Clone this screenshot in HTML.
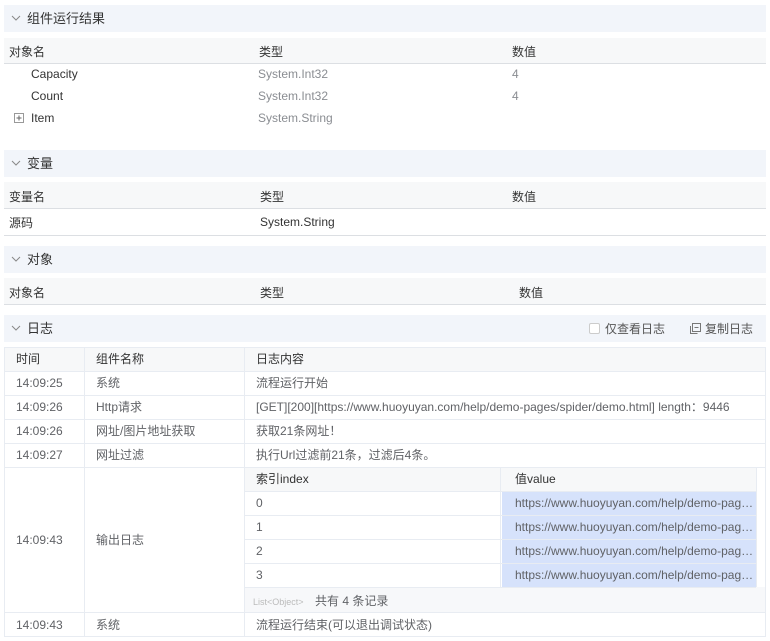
<!DOCTYPE html>
<html><head><meta charset="utf-8"><style>
*{box-sizing:border-box;margin:0;padding:0}
body{width:770px;height:641px;background:#fff;font-family:"Liberation Sans","Noto Sans CJK SC",sans-serif;font-size:12px;color:#333;position:relative;overflow:hidden}
.a{position:absolute;white-space:nowrap;line-height:14px;margin-top:1px}
.hd{position:absolute;left:4px;width:762px;height:27px;background:#f2f5fa}
.hd .t{position:absolute;left:23px;top:6px;font-size:13px;line-height:15px;color:#333}
.hd svg{position:absolute;left:7px;top:10px}
.th{position:absolute;left:4px;width:762px;background:#f7f8f9;border-bottom:1px solid #dcdfe3}
.ln{position:absolute;left:4px;width:762px;height:1px;background:#dcdfe3}
.g{color:#8a8d92}
.lg{color:#606266}
.b{position:absolute;background:#e8ecf2}
.blue{position:absolute;left:502px;width:254px;height:23px;background:#d6e2fb}
</style></head><body>
<div class="hd" style="top:5px"><svg width="10" height="6" viewBox="0 0 10 6"><path d="M1 1l4 4 4-4" fill="none" stroke="#888" stroke-width="1"/></svg><div class="t">组件运行结果</div></div>
<div class="th" style="top:38px;height:26px"></div>
<div class="a" style="left:9px;top:44px">对象名</div><div class="a" style="left:259px;top:44px">类型</div><div class="a" style="left:512px;top:44px">数值</div>
<div class="a" style="left:31px;top:66px">Capacity</div><div class="a g" style="left:258px;top:66px">System.Int32</div><div class="a g" style="left:512px;top:66px">4</div>
<div class="a" style="left:31px;top:88px">Count</div><div class="a g" style="left:258px;top:88px">System.Int32</div><div class="a g" style="left:512px;top:88px">4</div>
<svg class="a" style="left:14px;top:112px" width="10" height="10"><rect x="0.5" y="0.5" width="9" height="9" fill="#fff" stroke="#999"/><path d="M2.5 5h5M5 2.5v5" stroke="#666"/></svg>
<div class="a" style="left:31px;top:110px">Item</div><div class="a g" style="left:258px;top:110px">System.String</div>

<div class="hd" style="top:150px"><svg width="10" height="6" viewBox="0 0 10 6"><path d="M1 1l4 4 4-4" fill="none" stroke="#888"/></svg><div class="t">变量</div></div>
<div class="th" style="top:182px;height:27px"></div>
<div class="a" style="left:9px;top:189px">变量名</div><div class="a" style="left:260px;top:189px">类型</div><div class="a" style="left:512px;top:189px">数值</div>
<div class="a" style="left:9px;top:215px">源码</div><div class="a" style="left:260px;top:214px">System.String</div>
<div class="ln" style="top:235px"></div>

<div class="hd" style="top:246px"><svg width="10" height="6" viewBox="0 0 10 6"><path d="M1 1l4 4 4-4" fill="none" stroke="#888"/></svg><div class="t">对象</div></div>
<div class="th" style="top:278px;height:27px"></div>
<div class="a" style="left:9px;top:285px">对象名</div><div class="a" style="left:260px;top:285px">类型</div><div class="a" style="left:519px;top:285px">数值</div>

<div class="hd" style="top:315px"><svg width="10" height="6" viewBox="0 0 10 6"><path d="M1 1l4 4 4-4" fill="none" stroke="#888"/></svg><div class="t">日志</div>
<div style="position:absolute;left:585px;top:8px;width:11px;height:11px;border:1px solid #ccc;border-radius:2px;background:#fff"></div>
<div class="a" style="left:601px;top:6px;color:#555">仅查看日志</div>
<svg style="position:absolute;left:686px;top:8px" width="11" height="11"><rect x="2.5" y="0.5" width="8" height="8" fill="none" stroke="#777"/><path d="M0.5 3v7.5h7" fill="none" stroke="#777"/><path d="M4.5 4.5h4" stroke="#777"/></svg>
<div class="a" style="left:701px;top:6px;color:#555">复制日志</div></div>

<div style="position:absolute;left:4px;top:347px;width:762px;height:24px;background:#f7f8f9"></div>
<div style="position:absolute;left:245px;top:467px;width:511px;height:24px;background:#f7f8f9"></div>
<div style="position:absolute;left:245px;top:587px;width:521px;height:25px;background:#f7f8fa"></div>
<div class="b" style="left:4px;top:347px;width:762px;height:1px"></div>
<div class="b" style="left:4px;top:371px;width:762px;height:1px"></div>
<div class="b" style="left:4px;top:395px;width:762px;height:1px"></div>
<div class="b" style="left:4px;top:419px;width:762px;height:1px"></div>
<div class="b" style="left:4px;top:443px;width:762px;height:1px"></div>
<div class="b" style="left:4px;top:467px;width:762px;height:1px"></div>
<div class="b" style="left:4px;top:612px;width:762px;height:1px"></div>
<div class="b" style="left:4px;top:636px;width:762px;height:1px"></div>
<div class="b" style="left:4px;top:347px;width:1px;height:290px"></div>
<div class="b" style="left:84px;top:347px;width:1px;height:290px"></div>
<div class="b" style="left:244px;top:347px;width:1px;height:290px"></div>
<div class="b" style="left:765px;top:347px;width:1px;height:290px"></div>
<div class="b" style="left:245px;top:491px;width:511px;height:1px"></div>
<div class="b" style="left:245px;top:515px;width:511px;height:1px"></div>
<div class="b" style="left:245px;top:539px;width:511px;height:1px"></div>
<div class="b" style="left:245px;top:563px;width:511px;height:1px"></div>
<div class="b" style="left:245px;top:587px;width:511px;height:1px"></div>
<div class="b" style="left:500px;top:467px;width:1px;height:120px"></div>
<div class="b" style="left:756px;top:467px;width:1px;height:120px"></div>
<div class="blue" style="top:492px"></div><div class="blue" style="top:516px"></div><div class="blue" style="top:540px"></div><div class="blue" style="top:564px"></div>

<div class="a" style="left:16px;top:351px">时间</div><div class="a" style="left:96px;top:351px">组件名称</div><div class="a" style="left:256px;top:351px">日志内容</div>
<div class="a lg" style="left:16px;top:375px">14:09:25</div><div class="a lg" style="left:96px;top:375px">系统</div><div class="a lg" style="left:256px;top:375px">流程运行开始</div>
<div class="a lg" style="left:16px;top:399px">14:09:26</div><div class="a lg" style="left:96px;top:399px">Http请求</div><div class="a lg" style="left:256px;top:399px">[GET][200][https://www.huoyuyan.com/help/demo-pages/spider/demo.html] length：9446</div>
<div class="a lg" style="left:16px;top:423px">14:09:26</div><div class="a lg" style="left:96px;top:423px">网址/图片地址获取</div><div class="a lg" style="left:256px;top:423px">获取21条网址！</div>
<div class="a lg" style="left:16px;top:447px">14:09:27</div><div class="a lg" style="left:96px;top:447px">网址过滤</div><div class="a lg" style="left:256px;top:447px">执行Url过滤前21条，过滤后4条。</div>
<div class="a lg" style="left:16px;top:532px">14:09:43</div><div class="a lg" style="left:96px;top:532px">输出日志</div>
<div class="a" style="left:256px;top:471px">索引index</div><div class="a" style="left:515px;top:471px">值value</div>
<div class="a lg" style="left:256px;top:495px">0</div><div class="a lg" style="left:515px;top:495px">https://www.huoyuyan.com/help/demo-pag…</div>
<div class="a lg" style="left:256px;top:519px">1</div><div class="a lg" style="left:515px;top:519px">https://www.huoyuyan.com/help/demo-pag…</div>
<div class="a lg" style="left:256px;top:543px">2</div><div class="a lg" style="left:515px;top:543px">https://www.huoyuyan.com/help/demo-pag…</div>
<div class="a lg" style="left:256px;top:567px">3</div><div class="a lg" style="left:515px;top:567px">https://www.huoyuyan.com/help/demo-pag…</div>
<div class="a" style="left:253px;top:594px;font-size:9px;color:#bbb">List&lt;Object&gt;</div><div class="a lg" style="left:315px;top:593px">共有 4 条记录</div>
<div class="a lg" style="left:16px;top:617px">14:09:43</div><div class="a lg" style="left:96px;top:617px">系统</div><div class="a lg" style="left:256px;top:617px">流程运行结束(可以退出调试状态)</div>
</body></html>
